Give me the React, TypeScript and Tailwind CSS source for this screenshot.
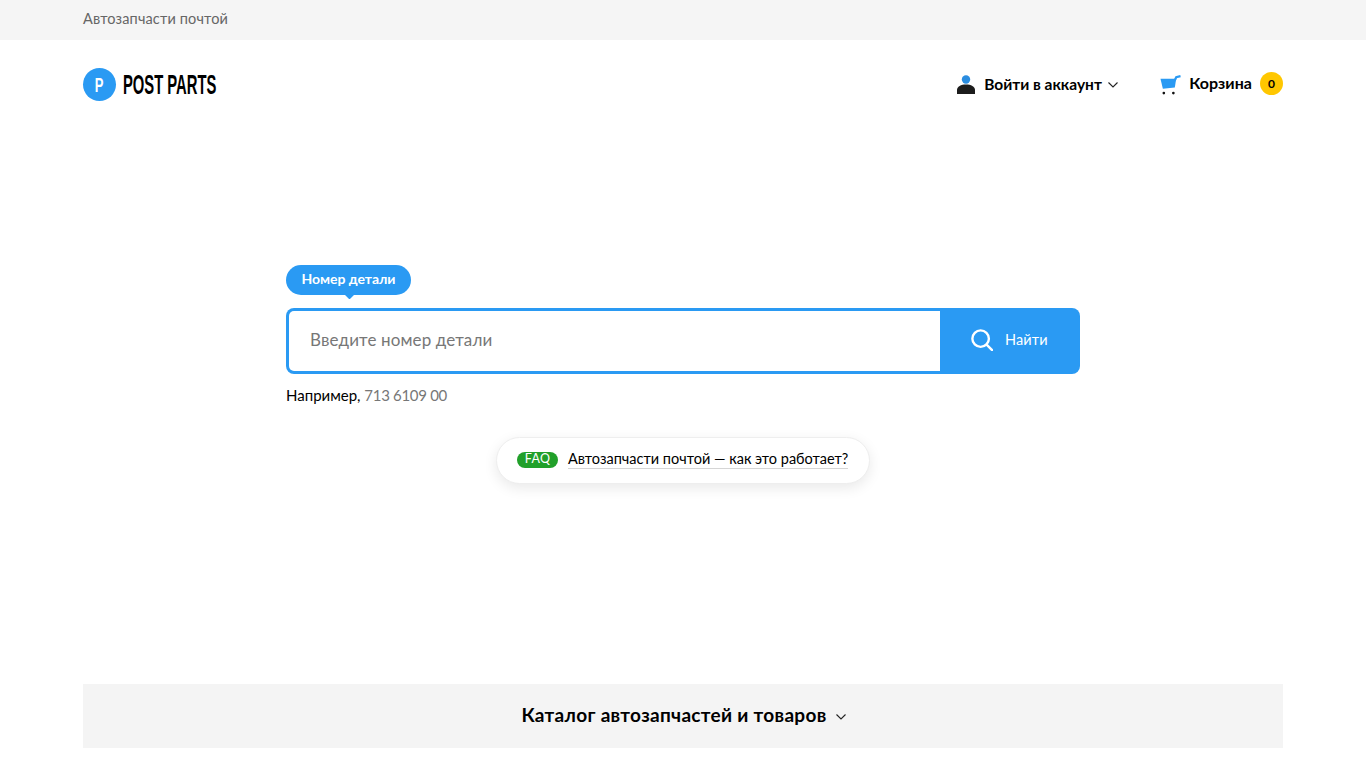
import React from "react";

const font = { fontFamily: '"Lato", "Noto Sans", sans-serif' };

function Chevron({ className }: { className?: string }) {
  return (
    <svg viewBox="0 0 10 6" className={className} fill="none" stroke="currentColor" strokeWidth="1.1">
      <path d="M0.5 0.5 L5 5 L9.5 0.5" />
    </svg>
  );
}

export default function App() {
  return (
    <div className="min-h-[768px] bg-white flex flex-col text-black" style={font}>
      <div className="h-10 bg-[#f5f5f5] shrink-0">
        <div className="w-[1200px] mx-auto h-full flex items-center text-[14.5px] text-[#666] tracking-[0.15px] pb-[2px]">
          Автозапчасти почтой
        </div>
      </div>

      <header className="w-[1200px] mx-auto h-[88px] shrink-0 flex items-center justify-between pt-[1px]">
        <div className="flex items-center gap-[7px]">
          <div className="w-[33px] h-[33px] rounded-full bg-[#2a9af3] flex items-center justify-center text-white font-bold text-[21px] font-['Liberation_Sans']">
            <span className="inline-block scale-x-[0.62]">P</span>
          </div>
          <span className="w-[93px] h-[24px] flex items-center overflow-visible">
            <span className="inline-block origin-left scale-x-[0.528] text-[28px] leading-none font-bold text-black font-['Liberation_Sans'] whitespace-nowrap">
              POST PARTS
            </span>
          </span>
        </div>
        <div className="flex items-center">
          <svg viewBox="0 0 18 19" className="w-[18px] h-[19px] mr-[9px]">
            <circle cx="9" cy="4.5" r="4.2" fill="#2a8de0" />
            <path d="M0 19 V15 C0 11.5 4 9.5 9 9.5 C14 9.5 18 11.5 18 15 V19 Z" fill="#1c1c1c" />
          </svg>
          <span className="text-[15.5px] font-bold tracking-[0px] whitespace-nowrap w-[117px]">Войти в аккаунт</span>
          <Chevron className="w-[10px] h-[6px] ml-[7px] mr-[1px] text-[#222]" />
          <svg viewBox="0 0 22 20" className="w-[21px] h-[20px] ml-[41px] mr-[8px]">
            <path d="M0.5 3.5 L17 3.5 L15.5 12.5 L3 14 Z" fill="#2a9af3" />
            <path d="M15.5 5 L17 1.8 L21.5 0.8" stroke="#2a9af3" strokeWidth="2.4" fill="none" />
            <circle cx="4" cy="18.5" r="1.4" fill="#111" />
            <circle cx="14" cy="18.5" r="1.4" fill="#111" />
          </svg>
          <span className="text-[16px] font-bold tracking-[0.05px] mr-[8px] pb-[3px]">Корзина</span>
          <span className="w-[23px] h-[23px] rounded-full bg-[#ffc700] flex items-center justify-center text-[12px] font-bold mb-[2px]">0</span>
        </div>
      </header>

      <main className="w-[794px] mx-auto shrink-0 pt-[137px] flex flex-col items-start">
        <div className="relative h-[30px] w-[125px] rounded-full bg-[#2a9af3] text-white text-[14px] font-bold flex items-center justify-center tracking-[-0.05px] whitespace-nowrap pb-[3px]">
          Номер детали
          <span className="absolute left-[60px] bottom-[-3px] w-[7px] h-[7px] rotate-45 rounded-[1px] bg-[#2a9af3]" />
        </div>
        <div className="mt-[13px] h-[66px] w-full flex rounded-[8px] bg-[#2a9af3] p-[3px] pr-0">
          <div className="flex-1 bg-white rounded-l-[5px] flex items-center pl-[21px] pb-[2px] text-[17px] text-[#777] tracking-[0.12px]">
            Введите номер детали
          </div>
          <div className="w-[140px] shrink-0 flex items-center pl-[31px] gap-[12px] text-white text-[14.5px] tracking-[0.1px] pb-[3px]">
            <svg viewBox="0 0 24 24" className="w-[22px] h-[22px]" fill="none" stroke="white" strokeWidth="2.6">
              <circle cx="10.5" cy="10.5" r="9" />
              <path d="M17 17 L23 23" strokeLinecap="round" />
            </svg>
            Найти
          </div>
        </div>
        <div className="mt-[10px] text-[15px] leading-[22px]">
          Например, <span className="text-[#777] tracking-[-0.3px]">713 6109 00</span>
        </div>
        <div className="self-center mt-[31px] h-[47px] w-[374px] rounded-full bg-white border border-[#eee] shadow-[0_4px_14px_rgba(0,0,0,0.09)] flex items-center pl-[20px] pb-[2px]">
          <span className="w-[41px] h-[16px] rounded-full bg-[#21a02a] text-white text-[12.5px] leading-[14px] text-center tracking-[0.3px]">FAQ</span>
          <span className="ml-[10px] text-[14.5px] leading-[18px] tracking-[0px] border-b border-[#d5d5d5] whitespace-nowrap">
            Автозапчасти почтой — как это работает?
          </span>
        </div>
      </main>

      <div className="w-[1200px] mx-auto mt-[200px] h-[64px] shrink-0 bg-[#f4f4f4] flex items-center justify-center pb-[1px]">
        <span className="text-[19px] font-bold tracking-[0.3px] ml-[1px]">Каталог автозапчастей и товаров</span>
        <Chevron className="w-[10px] h-[6px] ml-[9px] mt-[2px] text-[#222]" />
      </div>
      <div className="h-[20px] shrink-0" />
    </div>
  );
}
